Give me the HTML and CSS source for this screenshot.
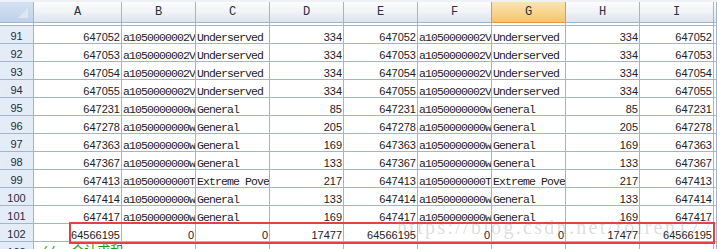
FILE: index.html
```html
<!DOCTYPE html>
<html>
<head>
    <meta charset="UTF-8">
    <title>Sheet1</title>
    <link rel="stylesheet" href="styles.css">
</head>
<body>
    <div class="sheet">
        <div class="strip"></div>

        <!-- cabecera de columnas -->
        <div class="row head">
            <div class="corner"><span class="tri"></span></div>
            <div>A</div><div>B</div><div>C</div><div>D</div><div>E</div><div>F</div>
            <div class="sel">G</div><div>H</div><div>I</div><div></div>
        </div>
        <div class="row gap">
            <div></div><div></div><div></div><div></div><div></div><div></div>
            <div></div><div></div><div></div><div></div><div></div>
        </div>

        <div class="row"><div class="rh">91</div><div class="n">647052</div><div class="t">a1050000002V</div><div class="t">Underserved</div><div class="n">334</div><div class="n">647052</div><div class="t">a1050000002V</div><div class="t">Underserved</div><div class="n">334</div><div class="n">647052</div><div></div></div>
        <div class="row"><div class="rh">92</div><div class="n">647053</div><div class="t">a1050000002V</div><div class="t">Underserved</div><div class="n">334</div><div class="n">647053</div><div class="t">a1050000002V</div><div class="t">Underserved</div><div class="n">334</div><div class="n">647053</div><div></div></div>
        <div class="row"><div class="rh">93</div><div class="n">647054</div><div class="t">a1050000002V</div><div class="t">Underserved</div><div class="n">334</div><div class="n">647054</div><div class="t">a1050000002V</div><div class="t">Underserved</div><div class="n">334</div><div class="n">647054</div><div></div></div>
        <div class="row"><div class="rh">94</div><div class="n">647055</div><div class="t">a1050000002V</div><div class="t">Underserved</div><div class="n">334</div><div class="n">647055</div><div class="t">a1050000002V</div><div class="t">Underserved</div><div class="n">334</div><div class="n">647055</div><div></div></div>
        <div class="row"><div class="rh">95</div><div class="n">647231</div><div class="t">a1050000000w</div><div class="t">General</div><div class="n">85</div><div class="n">647231</div><div class="t">a1050000000w</div><div class="t">General</div><div class="n">85</div><div class="n">647231</div><div></div></div>
        <div class="row"><div class="rh">96</div><div class="n">647278</div><div class="t">a1050000000w</div><div class="t">General</div><div class="n">205</div><div class="n">647278</div><div class="t">a1050000000w</div><div class="t">General</div><div class="n">205</div><div class="n">647278</div><div></div></div>
        <div class="row"><div class="rh">97</div><div class="n">647363</div><div class="t">a1050000000w</div><div class="t">General</div><div class="n">169</div><div class="n">647363</div><div class="t">a1050000000w</div><div class="t">General</div><div class="n">169</div><div class="n">647363</div><div></div></div>
        <div class="row"><div class="rh">98</div><div class="n">647367</div><div class="t">a1050000000w</div><div class="t">General</div><div class="n">133</div><div class="n">647367</div><div class="t">a1050000000w</div><div class="t">General</div><div class="n">133</div><div class="n">647367</div><div></div></div>
        <div class="row"><div class="rh">99</div><div class="n">647413</div><div class="t">a1050000000T</div><div class="t">Extreme Poverty</div><div class="n">217</div><div class="n">647413</div><div class="t">a1050000000T</div><div class="t">Extreme Poverty</div><div class="n">217</div><div class="n">647413</div><div></div></div>
        <div class="row"><div class="rh">100</div><div class="n">647414</div><div class="t">a1050000000w</div><div class="t">General</div><div class="n">133</div><div class="n">647414</div><div class="t">a1050000000w</div><div class="t">General</div><div class="n">133</div><div class="n">647414</div><div></div></div>
        <div class="row"><div class="rh">101</div><div class="n">647417</div><div class="t">a1050000000w</div><div class="t">General</div><div class="n">169</div><div class="n">647417</div><div class="t">a1050000000w</div><div class="t">General</div><div class="n">169</div><div class="n">647417</div><div></div></div>
        <!-- fila de totales -->
        <div class="row"><div class="rh">102</div><div class="n">64566195</div><div class="n">0</div><div class="n">0</div><div class="n">17477</div><div class="n">64566195</div><div class="n">0</div><div class="n">0</div><div class="n">17477</div><div class="n">64566195</div><div></div></div>
        <div class="row"><div class="rh">103</div><div class="t note">//&nbsp;&nbsp;合计求和</div><div></div><div></div><div></div><div></div><div></div><div></div><div></div><div></div><div></div></div>

        <div class="mark"></div>
        <div class="wm">https://blog.csdn.net/foiren177</div>
    </div>
</body>
</html>
```

FILE: styles.css
```css
body {
    margin: 0;
    padding: 0;
    background: #fff;
    overflow: hidden;
}

.sheet {
    position: relative;
    width: 717px;
    height: 249px;
    overflow: hidden;
}

.strip {
    height: 2px;
    background: #eef2f6;
}

.row {
    display: grid;
    grid-template-columns: 34px 88px repeat(8, 74px) 1fr;
}

.row > div {
    box-sizing: border-box;
    height: 18px;
    border-right: 1px solid #a3b5cc;
    border-bottom: 1px solid #a3b5cc;
    overflow: hidden;
    white-space: nowrap;
    color: #1c2226;
}

/* cabecera */
.head > div {
    height: 21px;
    border-color: #9eb6ce;
    background: linear-gradient(#fbfcfd, #f1f4f8 45%, #dde4ed);
    text-align: center;
    font-family: "Liberation Mono", monospace;
    font-size: 12px;
    line-height: 21px;
    color: #27313f;
}

.head .corner {
    position: relative;
    background: linear-gradient(#d3e1f3, #bfd2ea);
}

.tri {
    position: absolute;
    right: 5px;
    bottom: 4px;
    width: 0;
    height: 0;
    border-left: 10px solid transparent;
    border-bottom: 10px solid #dfe6ef;
}

.head .sel {
    background: linear-gradient(#fbe4b1, #f8d68f 50%, #f3c46c);
    border-color: #f29436;
    box-shadow: -1px 0 0 #f29436;
}

.gap > div {
    height: 3px;
    background: #fff;
}

/* celdas */
.rh {
    background: #e4ecf7;
    text-align: center;
    font-family: "Liberation Sans", Arial, sans-serif;
    font-size: 11px;
    line-height: 17px;
    padding-top: 2px;
}

.row > .rh {
    color: #1f2d3d;
}

.n {
    text-align: right;
    padding: 3px 1px 0 0;
    font-family: "Liberation Sans", Arial, sans-serif;
    font-size: 11px;
    line-height: 17px;
}

.t {
    padding: 3px 0 0 1px;
    font-family: "Liberation Mono", monospace;
    font-size: 11.5px;
    letter-spacing: -0.9px;
    line-height: 17px;
}

.row > .note {
    color: #1a9a1a;
    font-family: "Liberation Mono", "Noto Sans CJK SC", monospace;
    font-size: 13px;
    padding: 1px 0 0 6px;
    letter-spacing: 0;
    overflow: visible;
}

/* anotacion roja */
.mark {
    position: absolute;
    left: 69px;
    top: 222px;
    width: 646px;
    height: 22px;
    box-sizing: border-box;
    border: 2px solid #e84040;
}

.wm {
    position: absolute;
    left: 397px;
    top: 217px;
    font-family: "Liberation Serif", serif;
    font-size: 20px;
    line-height: 20px;
    letter-spacing: 2.3px;
    color: rgba(140, 140, 140, 0.3);
    white-space: nowrap;
}
```
